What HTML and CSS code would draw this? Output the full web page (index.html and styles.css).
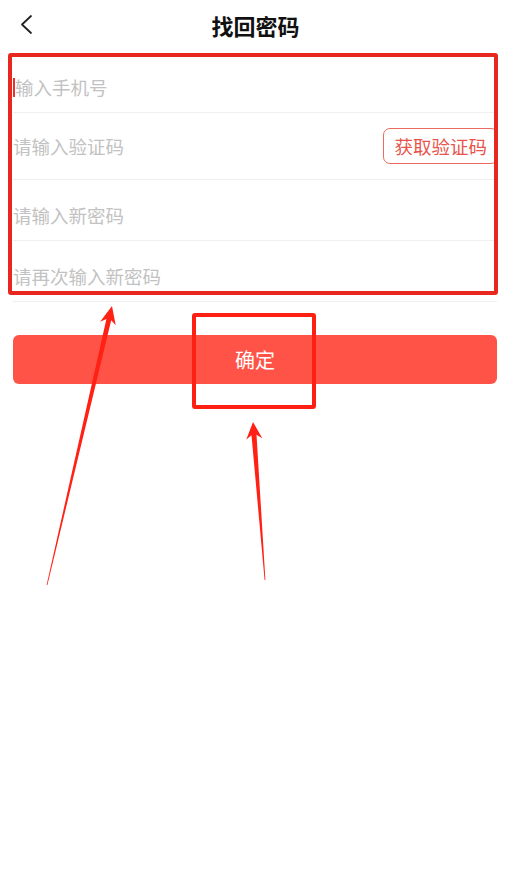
FILE: index.html
```html
<!DOCTYPE html>
<html lang="zh-CN">
<head>
    <meta charset="UTF-8">
    <meta name="viewport" content="width=device-width, initial-scale=1.0">
    <title>找回密码</title>
    <link rel="stylesheet" href="styles.css">
</head>
<body>
    <header class="nav">
        <span class="back">
            <svg width="16" height="22" viewBox="0 0 16 22"><polyline points="11,2 2,10.5 11,19" fill="none" stroke="#222" stroke-width="1.8" stroke-linecap="round" stroke-linejoin="round"/></svg>
        </span>
        <h1 class="title">找回密码</h1>
    </header>

    <div class="form">
        <div class="row row-first">
            <span class="caret"></span>
            <input class="field" type="text" placeholder="输入手机号">
        </div>
        <div class="row row-code">
            <input class="field" type="text" placeholder="请输入验证码">
            <button class="code-btn">获取验证码</button>
        </div>
        <div class="row">
            <input class="field" type="password" placeholder="请输入新密码">
        </div>
        <div class="row">
            <input class="field" type="password" placeholder="请再次输入新密码">
        </div>
    </div>

    <button class="submit">确定</button>

    <!-- 标注 -->
    <div class="mark mark-form"></div>
    <div class="mark mark-btn"></div>
    <svg class="arrows" width="514" height="894" viewBox="0 0 514 894">
        <polygon fill="#ff2114" points="112,306 115.7,325.3 111.2,320.2 47.4,585 46.6,585 106.4,319 100.1,321.7"/>
        <polygon fill="#ff2114" points="253,422 262.3,438.3 256.5,434.8 265.4,580 264.6,580 251.5,435.2 246.3,439.5"/>
    </svg>
</body>
</html>
```

FILE: styles.css
```css
body {
    margin: 0;
    background: #ffffff;
    font-family: "Noto Sans CJK SC", "Noto Sans", sans-serif;
    color: #222;
    position: relative;
    min-height: 894px;
}
.nav {
    height: 50px;
    display: flex;
    align-items: center;
    justify-content: center;
    position: relative;
}
.back {
    position: absolute;
    left: 20px;
    top: 14px;
}
.title {
    margin: 0 0 0 -3px;
    font-size: 22px;
    font-weight: bold;
    color: #111;
}
.form {
    margin: 0 17px 0 13px;
}
.row {
    box-sizing: border-box;
    height: 61px;
    padding-top: 10px;
    display: flex;
    align-items: center;
    border-bottom: 1px solid #efefef;
}
.row-first {
    height: 63px;
    padding-top: 12px;
}
.row-code {
    height: 67px;
    padding-top: 0;
}
.caret {
    width: 2px;
    height: 19px;
    background: #e8332a;
}
.field {
    flex: 1;
    min-width: 0;
    border: none;
    outline: none;
    padding: 0;
    font-family: inherit;
    font-size: 18.5px;
    line-height: 24px;
    color: #333;
    background: transparent;
}
.field::placeholder {
    color: #c2c2c2;
}
.code-btn {
    font-family: inherit;
    font-size: 18.5px;
    line-height: 24px;
    color: #e8544a;
    background: #fff;
    border: 1px solid #ea6a62;
    border-radius: 7px;
    padding: 5px 10px;
    margin-right: -1px;
}
.submit {
    display: block;
    box-sizing: border-box;
    width: 484px;
    height: 49px;
    margin: 33px 0 0 13px;
    border: none;
    border-radius: 6px;
    background: #ff5347;
    color: #fff;
    font-family: inherit;
    font-size: 20px;
}
.mark {
    position: absolute;
    box-sizing: border-box;
    border: 4px solid #e8271e;
    border-radius: 3px;
}
.mark-form {
    left: 8px;
    top: 53px;
    width: 490px;
    height: 242px;
}
.mark-btn {
    left: 192px;
    top: 313px;
    width: 124px;
    height: 96px;
    border-color: #ff2014;
}
.arrows {
    position: absolute;
    left: 0;
    top: 0;
    pointer-events: none;
}
```
